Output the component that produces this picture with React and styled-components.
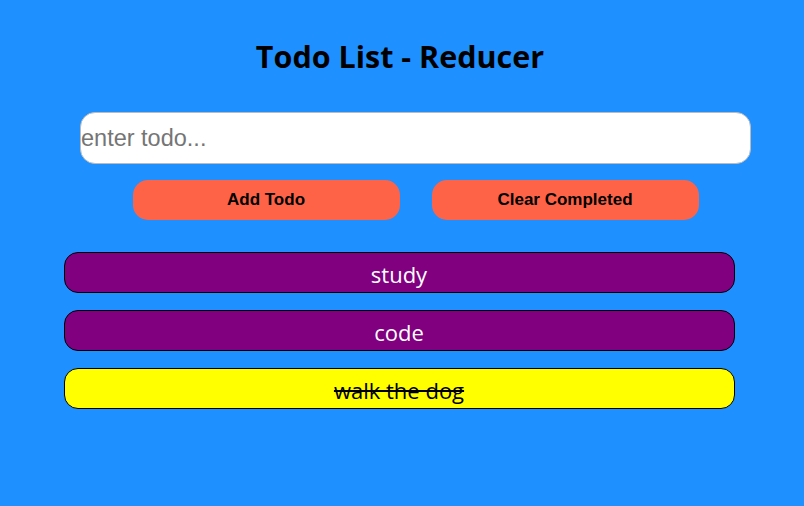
import {useState} from 'react';
import styled, {createGlobalStyle} from 'styled-components';

const GlobalStyle = createGlobalStyle`
  html, body {
    margin: 0;
    padding: 0;
    background-color: dodgerblue;
  }
`;

const AppContainer = styled.div`
  min-height: 506px;
  background-color: dodgerblue;
  font-family: "Open Sans", "Noto Sans", sans-serif;
  display: flex;
  flex-direction: column;
  align-items: center;
  padding-top: 36px;
  box-sizing: border-box;
`;

const Title = styled.h1`
  margin: 0 4px 0 0;
  font-size: 30.5px;
  font-weight: 700;
  line-height: 40px;
  color: #000;
`;

const Form = styled.form`
  display: flex;
  flex-direction: column;
  align-items: center;
  margin-top: 36px;
  margin-left: 27px;
  width: 671px;
`;

const TodoInput = styled.input`
  width: 671px;
  height: 52px;
  box-sizing: border-box;
  border: 1px solid #bbb;
  border-radius: 15px;
  padding: 0;
  font-family: "Liberation Sans", Arial, sans-serif;
  font-size: 23.5px;
  outline: none;

  &::placeholder {
    color: #757575;
  }
`;

const ButtonRow = styled.div`
  display: flex;
  gap: 32px;
  margin-top: 16px;
`;

const Button = styled.button`
  width: 267px;
  height: 40px;
  border: none;
  border-radius: 15px;
  background-color: tomato;
  font-family: "Liberation Sans", Arial, sans-serif;
  font-weight: 700;
  font-size: 17px;
  color: #000;
  cursor: pointer;
`;

const List = styled.div`
  display: flex;
  flex-direction: column;
  gap: 17px;
  margin-top: 32px;
  margin-right: 6px;
  width: 671px;
`;

const TodoItem = styled.div`
  height: 41px;
  box-sizing: border-box;
  padding-top: 3px;
  border: 1px solid #000;
  border-radius: 14px;
  background-color: ${props => props.completed ? 'yellow' : 'purple'};
  color: ${props => props.completed ? '#000' : '#fff'};
  text-decoration: ${props => props.completed ? 'line-through' : 'none'};
  display: flex;
  align-items: center;
  justify-content: center;
  font-size: 22px;
`;

const App = () => {
  const [todos] = useState([
    {id: 1, item: 'study', completed: false},
    {id: 2, item: 'code', completed: false},
    {id: 3, item: 'walk the dog', completed: true},
  ]);

  return (
    <AppContainer>
      <GlobalStyle/>
      <Title>Todo List - Reducer</Title>
      <Form onSubmit={e => e.preventDefault()}>
        <TodoInput type="text" placeholder="enter todo..."/>
        <ButtonRow>
          <Button type="submit">Add Todo</Button>
          <Button type="button">Clear Completed</Button>
        </ButtonRow>
      </Form>
      <List>
        {todos.map(todo => (
          <TodoItem key={todo.id} completed={todo.completed}>{todo.item}</TodoItem>
        ))}
      </List>
    </AppContainer>
  );
};

export default App;
